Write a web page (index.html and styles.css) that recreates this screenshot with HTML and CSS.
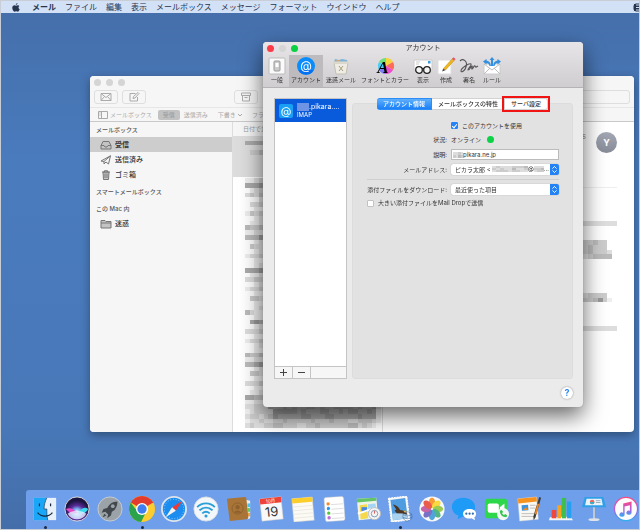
FILE: index.html
```html
<!DOCTYPE html>
<html lang="ja">
<head>
    <meta charset="UTF-8">
    <meta name="viewport" content="width=device-width, initial-scale=1.0">
    <title>メール - アカウント</title>
    <link rel="stylesheet" href="styles.css">
</head>
<body>
    <nav class="menubar">
        <svg class="apple" viewBox="0 0 16 18"><path d="M11 0c.2 2-1.500 3.800-3.300 3.900C7.500 2 9.200.3 11 0zM14.800 6.200c-2.700 1.700-2.300 5 .6 6.200-.8 2.300-2.400 4.900-4 4.900-1.300 0-1.700-.8-3.200-.8s-2 .8-3.200.8C2.800 17.300.5 13.300.5 9.700c0-3.500 2.200-5.300 4.300-5.300 1.400 0 2.500.9 3.400.9.800 0 2.100-1 3.800-1 1.200 0 2.200.6 2.800 1.900z"/></svg>
        <a href="#" class="app-name">メール</a>
        <a href="#">ファイル</a>
        <a href="#">編集</a>
        <a href="#">表示</a>
        <a href="#">メールボックス</a>
        <a href="#">メッセージ</a>
        <a href="#">フォーマット</a>
        <a href="#">ウインドウ</a>
        <a href="#">ヘルプ</a>
        <svg class="status-icon" viewBox="0 0 6 9"><rect width="12" height="9" rx="3"/><path d="M3 2h3M3 4.500h3M3 7h3"/></svg>
    </nav>

    <!-- Mail main window -->
    <section class="window mail">
        <header class="mail-head">
            <div class="lights"><i></i><i></i><i></i></div>
            <div class="mail-tools">
                <button aria-label="受信"><svg viewBox="0 0 12 10"><path d="M1 1.500h10v7H1zM1 1.500l5 4 5-4M1 8.500l3.500-4M11 8.500l-3.500-4"/></svg></button>
                <button aria-label="新規メッセージ"><svg viewBox="0 0 12 10"><path d="M7.500 1.500H2v7.500h7.500V5M5 6.500l.5-2L10 .5 11 1.500 7 6z"/></svg></button>
                <button class="archive" aria-label="アーカイブ"><svg viewBox="0 0 12 10"><path d="M1.500 1h9v2.500h-9zM2.500 3.500V9h7V3.500M4.500 5.500h3"/></svg></button>
                <input class="search" type="text" aria-label="検索">
            </div>
            <div class="favorites">
                <svg class="pane-icon" viewBox="0 0 10 8"><path d="M.5.5h9v7h-9zM3.500.5v7M1.500 2h1M1.500 4h1"/></svg>
                <a href="#">メールボックス</a>
                <a href="#" class="current">受信</a>
                <a href="#" class="sent">送信済み</a>
                <a href="#" class="draft">下書き<svg viewBox="0 0 6 4"><path d="M1 1l2 2 2-2"/></svg></a>
                <a href="#">フラグ</a>
            </div>
        </header>
        <div class="mail-body">
            <aside class="sidebar">
                <h3>メールボックス</h3>
                <a href="#" class="box selected"><svg viewBox="0 0 12 10"><path class="fill" d="M1 5.500 3 1.500h6l2 4V9H1z"/><path d="M1 5.500h3l1 1.500h2l1-1.500h3"/></svg>受信</a>
                <a href="#" class="box"><svg viewBox="0 0 12 10"><path d="M1 6 10.500.8 8.500 9 6 7 4 9V6.500L10.500.8M4 6.500 1 6"/></svg>送信済み</a>
                <a href="#" class="box"><svg viewBox="0 0 12 10"><path class="fill" d="M3 2h6l-.5 7.500h-5z"/><path d="M2 2h8M4.500 2V.7h3V2M5 3.500v4.500M7 3.500v4.500"/></svg>ゴミ箱</a>
                <h3>スマートメールボックス</h3>
                <h3>この Mac 内</h3>
                <a href="#" class="box"><svg viewBox="0 0 12 10"><path class="fill" d="M1 1.500h4l1 1h5V9H1z"/><path d="M1 4h10"/></svg>迷惑</a>
            </aside>
            <div class="list">
                <p>日付で並べ替え</p>
                <div class="list-items"><canvas id="messages"></canvas></div>
            </div>
            <article class="message">
                <div class="message-head"><span class="subject">s</span><span class="avatar">Y</span></div>
                <canvas id="body"></canvas>
            </article>
        </div>
    </section>

    <!-- Account preferences -->
    <section class="window prefs">
        <header class="prefs-head">
            <div class="lights active"><i></i><i></i><i></i></div>
            <h1>アカウント</h1>
            <div class="prefs-tools">
                <button><svg viewBox="0 0 18 18"><rect x="1" y="1" width="16" height="16" rx="1" fill="#fafafa" stroke="#bbb"/><rect x="6" y="4" width="6" height="10" rx="1" fill="#ccc" stroke="#999"/><rect x="7.500" y="6" width="3" height="4" fill="#fff"/></svg>一般</button>
                <button class="selected"><svg viewBox="0 0 18 18"><circle cx="9" cy="9" r="9" fill="#0a8dfb"/><path d="M1.200 13a9 9 0 0 0 15.600 0z" fill="#0571f0"/><text x="9" y="13" font-size="12" text-anchor="middle" fill="#fff">@</text></svg>アカウント</button>
                <button><svg viewBox="0 0 18 18"><path d="M2 5 3 2l4 1 3-1 5 1 1 3z" fill="#7fb2d6"/><path d="M3 4l4-1 1 2" fill="#f0a85a"/><path d="M2 6h14l-2 11H4z" fill="#eeece4" stroke="#c2bfb2"/><path d="M1 5.500h16" stroke="#ddd9cc" stroke-width="2"/><path d="M7 9l4 5M11 9l-4 5" stroke="#a69b78" fill="none"/></svg>迷惑メール</button>
                <button><svg viewBox="0 0 18 18"><path d="M10 9V1a8 8 0 0 1 7 4z" fill="#f7d43a"/><path d="M10 9l7-4a8 8 0 0 1 0 8z" fill="#ff6a5a"/><path d="M10 9l7 4a8 8 0 0 1-7 4z" fill="#ec4cd0"/><path d="M10 9v8a8 8 0 0 1-7-4z" fill="#7c7cf4"/><path d="M10 9l-7 4a8 8 0 0 1 0-8z" fill="#4ccdf5"/><path d="M10 9 3 5a8 8 0 0 1 7-4z" fill="#6be07c"/><text x="7" y="16" font-size="17" font-weight="bold" font-style="italic" text-anchor="middle" class="serif">A</text></svg>フォントとカラー</button>
                <button><svg viewBox="0 0 18 18"><path d="M0 3h18v10H0z" fill="#fff" stroke="#ccc"/><path d="M14 4h2.500v2.500H14z" fill="#3b9bdc"/><path d="M2 5h4M2 7h3" stroke="#ccc"/><g fill="#f4f4f4" stroke="#222" stroke-width="1.300"><circle cx="5" cy="13" r="3.300"/><circle cx="13" cy="13" r="3.300"/><path d="M8.300 12q.7-1 1.400 0" fill="none"/></g></svg>表示</button>
                <button><svg viewBox="0 0 18 18"><path d="M1 3h13v14H1z" fill="#fff" stroke="#ddd"/><path d="M6 12 16 1l2 1.500L8.500 13z" fill="#f3b51c" stroke="#b8860b" stroke-width=".5"/><path d="M15 2 16.500.3 18.500 2 17 3.500z" fill="#e2557f"/><path d="M6 12l-.8 2.500L8.500 13z" fill="#333"/></svg>作成</button>
                <button><svg viewBox="0 0 18 18"><path d="M0 4c3-3 8 0 6 6-1 4-5 6-5 4 0-3 8-8 10-7 1 2-4 5-3 6 2 0 3-4 4-4s-1 3 0 3 2-4 3-3 0 2 3 0" fill="none" stroke="#555" stroke-width="1.100"/></svg>署名</button>
                <button><svg viewBox="0 0 18 18"><path d="M1 7h16v10H1z" fill="#fff" stroke="#ccc"/><path d="M1 17l6-6M17 17l-6-6M1 7l8 6 8-6" fill="none" stroke="#bbb"/><path d="M8 9V3H6.500L9 0l2.500 3H10v6zM6.500 9C6 7 5 6 3.500 6v1.500L0 4.500 3.500 2v1.500C6.500 4 7.500 6 8 9zM11.500 9c.5-2 1.500-3 3-3v1.500l3.500-3L14.500 2v1.500C11.500 4 10.500 6 10 9z" fill="#338fdf"/></svg>ルール</button>
            </div>
        </header>
        <div class="prefs-body">
            <div class="accounts">
                <a href="#" class="account">
                    <svg viewBox="0 0 14 14"><rect width="14" height="14" rx="2" fill="#19a0f5"/><text x="7" y="11" font-size="11" text-anchor="middle" fill="#fff">@</text></svg>
                    <span><b><i class="hidden-name"></i>.pikara.…</b>IMAP</span>
                </a>
                <div class="account-buttons">
                    <button aria-label="追加"><svg viewBox="0 0 9 9"><path d="M1 4.500h7M4.500 1v7"/></svg></button>
                    <button aria-label="削除"><svg viewBox="0 0 9 9"><path d="M1 4.500h7"/></svg></button>
                </div>
            </div>
            <div class="settings">
                <div class="tabs">
                    <button class="on">アカウント情報</button>
                    <button>メールボックスの特性</button>
                    <button class="marked">サーバ設定</button>
                </div>
                <form class="panel">
                    <div class="row">
                        <span></span>
                        <label class="check"><input type="checkbox" checked>このアカウントを使用</label>
                    </div>
                    <div class="row">
                        <span>状況:</span>
                        <span class="online">オンライン<i></i></span>
                    </div>
                    <div class="row">
                        <label for="desc">説明:</label>
                        <div class="field"><canvas id="descName"></canvas><input id="desc" type="text" value="pikara.ne.jp"></div>
                    </div>
                    <div class="row">
                        <label for="address">メールアドレス:</label>
                        <div class="popup">
                            <select id="address"><option>ピカラ太郎 &lt;</option></select>
                            <span class="masked"><canvas id="user"></canvas>@<canvas id="domain"></canvas>…</span>
                            <svg viewBox="0 0 9 11"><path d="M2.500 4.500l2-2 2 2M2.500 6.500l2 2 2-2"/></svg>
                        </div>
                    </div>
                    <hr>
                    <div class="row">
                        <label for="attach">添付ファイルをダウンロード:</label>
                        <div class="popup">
                            <select id="attach"><option>最近使った項目</option></select>
                            <svg viewBox="0 0 9 11"><path d="M2.500 4.500l2-2 2 2M2.500 6.500l2 2 2-2"/></svg>
                        </div>
                    </div>
                    <label class="check"><input type="checkbox">大きい添付ファイルをMail Dropで送信</label>
                </form>
            </div>
        </div>
        <footer class="prefs-foot"><button class="help">?</button></footer>
    </section>

    <nav class="dock">
        <button class="running" aria-label="Finder"><svg viewBox="0 0 28 28"><path d="M2 2h24v24H2z" fill="#e8f1fa"/><path d="M2 2h14c-2 4-3 8-3 12h3c0 4 0 8 1 12H2z" fill="#1ba7f7"/><path d="M16 2c-2 4-3 8-3 12h3c0 4 0 8 1 12" fill="none" stroke="#1d3550" stroke-width=".7"/><path d="M8 8v3M20 8v3M6 18c4 5 12 5 16 0" fill="none" stroke="#14263c" stroke-width="1.300"/></svg></button>
        <button aria-label="Siri"><svg viewBox="0 0 28 28"><defs><radialGradient id="siri" cy=".65"><stop offset="0" stop-color="#fff"/><stop offset=".3" stop-color="#7cb8f4"/><stop offset=".6" stop-color="#5a2b9a"/><stop offset="1" stop-color="#1c1540"/></radialGradient></defs><circle cx="14" cy="14" r="13" fill="url(#siri)" stroke="#ddd"/><path d="M2 14c7-3 10 3 13 4-5 2-10 0-13-4z" fill="#e647c4"/><path d="M26 14c-5-4-9 2-12 4 5 3 10 0 12-4z" fill="#36d9ee"/><path d="M4 19c6-4 14-4 20 0-4 8-16 8-20 0z" fill="#e6eeff" opacity=".8"/></svg></button>
        <button aria-label="Launchpad"><svg viewBox="0 0 28 28"><circle cx="14" cy="14" r="13" fill="#9ba3a8" stroke="#c9ced1"/><path d="M22 6c-5 0-9 3-11 7l-4 1-2 4 4-1 3 3-1 4 4-3 1-4c4-2 6-6 6-11z" fill="#41474c"/><circle cx="17" cy="11" r="2" fill="#9ba3a8"/><path d="M8 19l-2 4 4-2z" fill="#41474c"/></svg></button>
        <button class="running" aria-label="Chrome"><svg viewBox="0 0 28 28"><circle cx="14" cy="14" r="14" fill="#fccd30"/><path d="M14 14 1.900 7a14 14 0 0 1 24.200 0z" fill="#e33b2e"/><path d="M14 14H7L1.900 7A14 14 0 0 0 13 28l5-10z" fill="#2ba24c"/><path d="M14 7.500h12.400l-.4-.6" fill="#e33b2e"/><circle cx="14" cy="14" r="6.500" fill="#fff"/><circle cx="14" cy="14" r="5" fill="#3f7ef0"/></svg></button>
        <button aria-label="Safari"><svg viewBox="0 0 28 28"><circle cx="14" cy="14" r="13" fill="#1c8df0" stroke="#dde4ea" stroke-width="2"/><circle cx="14" cy="14" r="10.500" fill="none" stroke="#9fd0fa" stroke-dasharray="1 2"/><path d="M23 5 16 16l-4-4z" fill="#f03a35"/><path d="M5 23l7-11 4 4z" fill="#f3f3f3"/></svg></button>
        <button aria-label="Wi-Fi"><svg viewBox="0 0 28 28"><circle cx="14" cy="14" r="13" fill="#f4f7fa" stroke="#d5dde4"/><path d="M4.500 12c5-5.500 14-5.500 19 0M7 15.500c4-4 10-4 14 0M10 18.700c2.500-2.300 5.500-2.300 8 0" fill="none" stroke="#2b9fd8" stroke-width="2"/><circle cx="14" cy="21.500" r="1.700" fill="#2b9fd8"/></svg></button>
        <button aria-label="連絡先"><svg viewBox="0 0 28 28"><path d="M21 4l5 1v19l-3 1z" fill="#eee"/><path d="M23 8h3v4h-3z" fill="#45c3ef"/><path d="M23 13h3v4h-3z" fill="#6cc94b"/><path d="M23 18h3v4h-3z" fill="#f2a33a"/><path d="M1 3 20 1q2 0 2 2l2 20q0 2-2 2L4 27z" fill="#a87437"/><circle cx="12.500" cy="13.500" r="6" fill="none" stroke="#8d602c"/><circle cx="12.500" cy="12" r="2.300" fill="#8d602c"/><path d="M8.500 18q4-5 8 0" fill="#8d602c"/></svg></button>
        <button aria-label="カレンダー"><svg viewBox="0 0 28 28"><g transform="rotate(-6 14 14)"><path d="M3 2h23v24H3z" fill="#f8f8f8" stroke="#ccc" stroke-width=".5"/><path d="M3 2h23v6H3z" fill="#ee4137"/><text x="14.500" y="7" font-size="5" text-anchor="middle" fill="#fff">10月</text><text x="14.500" y="22" font-size="14" text-anchor="middle" fill="#333">19</text></g></svg></button>
        <button aria-label="メモ"><svg viewBox="0 0 28 28"><g transform="rotate(-5 14 14)"><path d="M3 2h22v25H3z" fill="#fbfaf4" stroke="#d5d3c6" stroke-width=".5"/><path d="M3 2h22v5H3z" fill="#fcce2b"/><path d="M3 11h22M3 15h22M3 19h22M3 23h22" stroke="#e4e1d7" stroke-width=".7"/></g></svg></button>
        <button aria-label="リマインダー"><svg viewBox="0 0 28 28"><g transform="rotate(-4 14 14)"><rect x="3" y="1" width="21" height="26" rx="2" fill="#fff" stroke="#ccc" stroke-width=".5"/><path d="M10 9h13M10 14h13M10 19h13M10 24h13" stroke="#ddd"/><circle cx="7" cy="8" r="1.800" fill="#f58b2c"/><circle cx="7" cy="13" r="1.800" fill="#2d96ee"/><circle cx="7" cy="18" r="1.800" fill="#52c43e"/><circle cx="7" cy="23" r="1.800" fill="#c26be0"/></g></svg></button>
        <button aria-label="マップ"><svg viewBox="0 0 28 28"><path d="M2 3l21-1 2 22-21 2z" fill="#eef3e6"/><path d="M2 3l21-1v3L2 7z" fill="#65c466"/><path d="M5 10l8-1 1 15-8 1z" fill="#f5d84b"/><path d="M14 9l8-1 1 8-9 2z" fill="#a5d5f2"/><path d="M7 12h6v5H7z" fill="#4b87e0"/><path d="M3 19l18-6" stroke="#fff" stroke-width="2"/><circle cx="21" cy="19" r="6.500" fill="#f4f4f4" stroke="#bbb"/><circle cx="21" cy="19" r="3.500" fill="none" stroke="#7d9ab2"/><path d="M21 16v3" stroke="#d55"/></svg></button>
        <button class="running" aria-label="メール"><svg viewBox="0 0 28 28"><g transform="rotate(-7 14 14)"><path d="M3 1h20v26H3z" fill="#f7f7f7" stroke="#fff" stroke-dasharray="2 1"/><path d="M5 3h16v22H5z" fill="#4f9de0"/><path d="M5 18h16v7H5z" fill="#a9d2f0"/><path d="M7 8c4 2 6 4 7 7l6 2 1 4-5-2-6-1-2-3 2-1z" fill="#4b3524"/><path d="M17 16l4 1-2 2z" fill="#e0b84b"/></g><circle cx="22" cy="22" r="5" fill="none" stroke="#41618b" opacity=".5"/><path d="M17 20q5 3 10 0M17 23q5 3 10 0" fill="none" stroke="#41618b" opacity=".5"/></svg></button>
        <button aria-label="写真"><svg viewBox="0 0 28 28"><circle cx="14" cy="14" r="13.500" fill="#f8f8f8"/><g opacity=".9"><ellipse cx="14" cy="7.500" rx="3.500" ry="5.500" fill="#f7931e"/><ellipse cx="14" cy="7.500" rx="3.500" ry="5.500" fill="#f8d62c" transform="rotate(45 14 14)"/><ellipse cx="14" cy="7.500" rx="3.500" ry="5.500" fill="#93c83d" transform="rotate(90 14 14)"/><ellipse cx="14" cy="7.500" rx="3.500" ry="5.500" fill="#3fae78" transform="rotate(135 14 14)"/><ellipse cx="14" cy="7.500" rx="3.500" ry="5.500" fill="#3e9bd8" transform="rotate(180 14 14)"/><ellipse cx="14" cy="7.500" rx="3.500" ry="5.500" fill="#6a62c0" transform="rotate(225 14 14)"/><ellipse cx="14" cy="7.500" rx="3.500" ry="5.500" fill="#c055a0" transform="rotate(270 14 14)"/><ellipse cx="14" cy="7.500" rx="3.500" ry="5.500" fill="#e94b3c" transform="rotate(315 14 14)"/></g></svg></button>
        <button aria-label="メッセージ"><svg viewBox="0 0 28 28"><path d="M13 2c7 0 13 4 13 10s-6 10-13 10l-6 3 1-4c-4-1-7-5-7-9C1 6 6 2 13 2z" fill="#1d9bf7"/><path d="M20 14c4 0 7 2 7 5 0 2-1 4-2 4l1 3-4-2c-6 1-9-2-9-5s3-5 7-5z" fill="#fff"/><g fill="#2b6cb0"><circle cx="16.500" cy="19" r="1.200"/><circle cx="20" cy="19" r="1.200"/><circle cx="23.500" cy="19" r="1.200"/></g></svg></button>
        <button aria-label="FaceTime"><svg viewBox="0 0 28 28"><rect x="1" y="3" width="24" height="21" rx="3" fill="#2cd849"/><rect x="4" y="8" width="12" height="10" rx="2" fill="#fff"/><path d="M17 12l5-4v10l-5-4z" fill="#fff"/><circle cx="20.500" cy="19.500" r="6.500" fill="#f4f8f4"/><path d="M17 16c0 4 3 7 7 7l1-2-2-1.500-1.500 1q-1.500-1-2-2l1-1.500-1.500-2z" fill="#35c64e"/></svg></button>
        <button aria-label="Pages"><svg viewBox="0 0 28 28"><path d="M2 3l20-2 2 24-20 2z" fill="#faf8f3" stroke="#ddd" stroke-width=".5"/><path d="M2 3l20-2 .5 5-20 2z" fill="#f5931e"/><path d="M6 10l7-.6.4 6-7 .6z" fill="#3b93dd"/><path d="M7 15l4-3 2 3z" fill="#f28a1e"/><path d="M15 10h6M15 13h6M6 19h15M6 22h15" stroke="#bbb"/><path d="M25 1l2 1-6 21-2 3-.3-4z" fill="#3d3a38"/><path d="M23 8l2 .6L22 20l-2-.5z" fill="#f0861c"/></svg></button>
        <button aria-label="Numbers"><svg viewBox="0 0 28 28"><path d="M2 23l22-1 3 4H1z" fill="#f4f4f4"/><path d="M4 15h5v9H4z" fill="#f0463c"/><path d="M10 10h4v14h-4z" fill="#f6a421"/><path d="M15 2h4.500v22H15z" fill="#3cbf4e"/><path d="M20.500 6H25v18h-4.500z" fill="#259ff0"/></svg></button>
        <button aria-label="Keynote"><svg viewBox="0 0 28 28"><path d="M4 1h20l3 11H1z" fill="#2f9fe6"/><path d="M6 3h16l1.500 7h-19z" fill="#e9f3fa"/><circle cx="12" cy="6.500" r="2.500" fill="#f06a5c"/><path d="M9.500 6.500h5a2.500 2.500 0 0 1-5 0z" fill="#39b0c8"/><path d="M16 5h5M16 7h5" stroke="#9ab"/><path d="M14 12v13" stroke="#c7ccd2" stroke-width="2"/><ellipse cx="14" cy="25.500" rx="6" ry="1.500" fill="#dfe3e7"/></svg></button>
        <button aria-label="iTunes"><svg viewBox="0 0 28 28"><defs><linearGradient id="note" x2="0" y2="1"><stop offset="0" stop-color="#fb4a80"/><stop offset=".5" stop-color="#b45be0"/><stop offset="1" stop-color="#31aef2"/></linearGradient></defs><circle cx="14" cy="14" r="12.500" fill="#fcfcfd" stroke="url(#note)" stroke-width="1.500"/><path d="M11 8l9-2v12a2.800 2.300 0 1 1-1.800-2.200V10L12.500 11.300V20a2.800 2.300 0 1 1-1.500-2z" fill="url(#note)"/></svg></button>
    </nav>

    <script>
        // Paint one pixel per hex digit, the stylesheet scales the canvas up
        function mosaic(id, width, rows) {
            const canvas = document.getElementById(id);
            canvas.width = width;
            canvas.height = rows.length;
            const ctx = canvas.getContext('2d');
            rows.forEach((row, y) => {
                [...row].forEach((digit, x) => {
                    if (digit === '.') return;
                    ctx.fillStyle = '#' + digit + digit + digit;
                    ctx.fillRect(x, y, 1, 1);
                });
            });
        }

        mosaic('messages', 29, [
            '....', 'aaaa5', '....', '.ccb9', '....', '....', '....', '....', '....', 'eedc',
            'aaa95', 'fedc', 'dcdb8', 'fffd', 'fddc9', 'ffee', 'ecdc8', 'ffed', 'feed', 'bccb6',
            'eedd', 'bbb96', 'ffed', 'fcdd9', 'ffed', 'eddc9', 'ffee', 'ffed', 'aaa94', 'feed',
            'ddcc9', 'ffed', 'eddc9', 'ffee', 'fccd9', 'ffee', 'ffed', 'bdee8', 'ffee', 'fa9a6',
            'ffed', 'dddc8', 'ffee', 'eddc9', 'ffed', 'ffee', 'bccb6', 'eedd', 'bba97', 'ffed',
            'fccd9', 'ffee', 'dddc8', 'ffee', 'feed', 'aabb6', 'eedd', 'ddccc9aa9a9aa99a9aa9999a9aa9d',
            'edcccc99999a9aaa99aa9a99aa9ae', 'dccdcb9aaaaa99aaa99aaaaa9aaae',
            'eddcddccbcccccbcccbcccddcccde', 'dcddccbbcccddccbccccccbbdcde'
        ]);
        mosaic('body', 10, [
            'dddddddddd', '..........', '..........', '..........', 'ccbccbcc..', 'ccccbccc..', 'dddcbcccd.', 'cdcdcbbbb.',
            '..........', '..........', '..........', '..........', '..........', '..........', '..........', 'ccddcccc..', 'bdbccb9ce.',
            '..........', '..........', '..........', '..........', '..........', 'dddddddddd'
        ]);
        mosaic('descName', 4, ['ddcd', 'cdbc']);
        mosaic('user', 9, ['dcdddcccb', 'cdcddbddc', 'dcccdccdd']);
        mosaic('domain', 3, ['ddd', 'ccb', 'dcc']);
    </script>
</body>
</html>
```
FILE: styles.css
```css
* {
    box-sizing: border-box;
}

body {
    margin: 0;
    min-height: 100vh;
    position: relative;
    overflow: hidden;
    border: 1px solid #c9cdd6;
    background: linear-gradient(#446ea9, #4a7bbd 30%, #4878b8 80%, #446ea9);
    font-family: Inter, "Noto Sans CJK JP", sans-serif;
    font-size: 6px;
    line-height: 8px;
    color: #333;
}

a {
    color: inherit;
    text-decoration: none;
}

button,
input,
select {
    font: inherit;
    color: inherit;
    margin: 0;
    padding: 0;
    border: none;
    background: none;
}

h1,
h3,
p {
    margin: 0;
}

canvas {
    display: block;
    image-rendering: pixelated;
}

.serif {
    font-family: "Liberation Serif", serif;
}

/* menu bar */
.menubar {
    display: flex;
    align-items: center;
    gap: 9px;
    height: 12px;
    padding-left: 11px;
    background: #d3e1f6;
    color: #26344e;
    font-size: 8px;
    line-height: 12px;
}

.app-name {
    font-weight: bold;
}

.apple {
    width: 8px;
    height: 9px;
    margin-right: 3px;
    fill: #26344e;
}

.status-icon {
    width: 6px;
    height: 9px;
    margin-left: auto;
    fill: #26344e;
    stroke: #d3e1f6;
}

/* windows */
.window {
    position: absolute;
    display: flex;
    flex-direction: column;
    border-radius: 4px;
    overflow: hidden;
}

.lights {
    display: flex;
    gap: 5px;
    padding: 3px 4px;
}

.lights i {
    width: 7px;
    height: 7px;
    border-radius: 50%;
    background: #d5d5d5;
}

.lights.active i:first-child {
    background: #fb3b47;
}

.lights.active i:last-child {
    background: #09d142;
}

.mail {
    left: 89px;
    right: 5px;
    top: 75px;
    bottom: 97px;
    background: #fff;
    box-shadow: 0 3px 10px rgba(0, 0, 0, 0.35);
}

.mail-head {
    background: #f6f6f6;
    border-bottom: 1px solid #c9c9c9;
}

.mail-tools {
    display: flex;
    gap: 4px;
    padding: 1px 4px 3px;
}

.mail-tools button,
.search {
    width: 24px;
    height: 14px;
    border: 1px solid #dedede;
    border-radius: 3px;
}

.mail-tools svg {
    display: block;
    width: 12px;
    height: 10px;
    margin: 0 auto;
    fill: none;
    stroke: #aaa;
}

.mail-tools .archive {
    margin-left: 84px;
}

.search {
    width: 80px;
    margin-left: auto;
}

.favorites {
    display: flex;
    align-items: center;
    height: 14px;
    padding-left: 8px;
    border-top: 1px solid #e6e6e6;
    color: #a9a9a9;
}

.favorites svg {
    fill: none;
    stroke: #a9a9a9;
}

.pane-icon {
    width: 10px;
    height: 8px;
    margin-right: 2px;
}

.favorites .current {
    margin: 0 4px 0 6px;
    padding: 1px 5px;
    border-radius: 2px;
    background: #c2c2c2;
    color: #999;
}

.sent {
    margin-right: 10px;
}

.draft {
    margin-right: 9px;
}

.draft svg {
    width: 6px;
    height: 4px;
    margin-left: 1px;
}

.mail-body {
    flex: 1;
    display: flex;
    min-height: 0;
}

.sidebar {
    width: 142px;
    background: #f6f6f6;
}

.sidebar h3 {
    padding: 4px 6px 3px;
    font-size: 6px;
    font-weight: 500;
    color: #555;
}

.box + h3,
.sidebar h3 + h3 {
    padding-top: 6px;
}

.box {
    display: flex;
    align-items: center;
    gap: 3px;
    height: 15px;
    padding-left: 10px;
    font-size: 7px;
    font-weight: 500;
}

.box.selected {
    background: #cdcdcd;
    font-weight: bold;
}

.box svg {
    width: 12px;
    height: 10px;
    fill: none;
    stroke: #777;
}

.box .fill {
    fill: #c4c4c4;
}

.list {
    width: 151px;
    border: solid #ddd;
    border-width: 0 1px;
}

.list p {
    padding: 3px 10px;
    background: #f6f6f6;
    color: #999;
}

.list-items {
    padding-left: 12px;
    background: linear-gradient(#dcdcdc 41px, #fff 41px);
}

#messages {
    width: 136px;
    height: 292px;
}

.message {
    flex: 1;
    padding: 10px 17px 0;
}

.message-head {
    display: flex;
    justify-content: flex-end;
    gap: 10px;
    height: 56px;
    border-bottom: 1px solid #eee;
    color: #999;
    font-size: 8px;
}

.avatar {
    width: 21px;
    height: 21px;
    border-radius: 50%;
    background: linear-gradient(#a3a8b4, #878b98);
    color: #fff;
    font-size: 9px;
    line-height: 21px;
    font-weight: bold;
    text-align: center;
}

#body {
    width: 48px;
    height: 110px;
    margin: 33px 0 0 auto;
}

/* preferences */
.prefs {
    left: 262px;
    top: 41px;
    width: 320px;
    background: #ebebeb;
    box-shadow: 0 0 1px #777, 0 9px 22px rgba(0, 0, 0, 0.6);
}

.prefs-head {
    position: relative;
    height: 46px;
    background: linear-gradient(#e8e5e8, #cfcdcf);
    border-bottom: 1px solid #b5b3b5;
}

.prefs-head h1 {
    position: absolute;
    inset: 2px 0 auto;
    font-size: 7px;
    font-weight: normal;
    text-align: center;
}

.prefs-tools {
    display: flex;
    gap: 1px;
    padding-left: 3px;
}

.prefs-tools button {
    display: flex;
    flex-direction: column;
    align-items: center;
    gap: 1px;
    min-width: 22px;
    height: 32px;
    padding: 2px 2px 0;
    white-space: nowrap;
}

.prefs-tools .selected {
    background: #bdbbbd;
}

.prefs-tools svg {
    width: 18px;
    height: 18px;
    overflow: visible;
}

.prefs-body {
    display: flex;
    gap: 5px;
    padding: 10px 10px 0 11px;
}

.accounts {
    display: flex;
    flex-direction: column;
    width: 73px;
    height: 281px;
    border: 1px solid #c4c4c4;
    background: #fff;
}

.account {
    display: flex;
    align-items: center;
    gap: 4px;
    height: 23px;
    padding-left: 4px;
    background: #0a5bdc;
    color: #fff;
}

.account svg {
    width: 14px;
    height: 14px;
}

.account b {
    display: flex;
    align-items: center;
    font-size: 7px;
    font-weight: normal;
}

.hidden-name {
    width: 12px;
    height: 8px;
    background: #6f94e4;
}

.account-buttons {
    display: flex;
    height: 12px;
    margin-top: auto;
    border-top: 1px solid #c4c4c4;
    background: #f6f6f6;
}

.account-buttons button {
    width: 18px;
    border-right: 1px solid #c4c4c4;
}

.account-buttons svg {
    display: block;
    width: 9px;
    height: 9px;
    margin: 0 auto;
    stroke: #444;
}

.settings {
    flex: 1;
    display: flex;
    flex-direction: column;
}

.tabs {
    position: relative;
    display: flex;
    justify-content: center;
    height: 12px;
    margin-bottom: -7px;
}

.tabs button {
    padding: 0 6px;
    border: 1px solid #d2d2d2;
    border-left: none;
    background: #fff;
    font-weight: 500;
}

.tabs .on {
    border-color: #2d8df6;
    border-radius: 3px 0 0 3px;
    background: linear-gradient(#5eb0fc, #1a7ff7);
    color: #fff;
}

.tabs .marked {
    position: relative;
    border-radius: 0 3px 3px 0;
}

.marked::after {
    content: "";
    position: absolute;
    inset: -3px;
    border: 2px solid #f01414;
}

.panel {
    flex: 1;
    padding: 16px 13px 0 14px;
    border: 1px solid #dcdcdc;
    border-radius: 3px;
    background: #e2e2e2;
}

.row {
    display: grid;
    grid-template-columns: 80px 1fr;
    gap: 4px;
    align-items: center;
    height: 11px;
    margin-bottom: 4px;
    white-space: nowrap;
}

.row:first-child {
    margin-bottom: 3px;
}

.row > :first-child {
    text-align: right;
}

.row > * {
    min-width: 0;
}

.check {
    display: flex;
    align-items: center;
    gap: 4px;
}

.check input {
    appearance: none;
    width: 7px;
    height: 7px;
    border: 1px solid #c2c2c2;
    border-radius: 1px;
    background: #fff;
}

.check input:checked {
    border-color: #2583f6;
    background: #2583f6;
    position: relative;
}

.check input:checked::after {
    content: "";
    position: absolute;
    left: 1px;
    top: 0;
    width: 2px;
    height: 4px;
    border: solid #fff;
    border-width: 0 1px 1px 0;
    transform: rotate(40deg);
}

.online {
    display: flex;
    align-items: center;
    gap: 6px;
}

.online i {
    width: 7px;
    height: 7px;
    border-radius: 50%;
    background: #0bd246;
}

.field {
    display: flex;
    align-items: center;
    height: 11px;
    padding-left: 1px;
    border: 1px solid #bbb;
    background: #fff;
}

.field input {
    flex: 1;
    min-width: 0;
    height: 9px;
    outline: none;
}

#descName {
    width: 10px;
    height: 6px;
}

.popup {
    position: relative;
    display: flex;
    height: 11px;
    border-radius: 2px;
    overflow: hidden;
    background: #fff;
    box-shadow: 0 0 1px #888;
}

.popup select {
    flex: 1;
    min-width: 0;
    padding-left: 4px;
    appearance: none;
    outline: none;
}

.popup svg {
    width: 9px;
    height: 11px;
    background: #2482f7;
    fill: none;
    stroke: #fff;
}

.masked {
    position: absolute;
    inset: 1px auto auto 41px;
    display: flex;
    align-items: center;
}

#user {
    width: 36px;
    height: 6px;
}

#domain {
    width: 10px;
    height: 6px;
}

hr {
    margin: 0 0 4px;
    border: none;
    border-top: 1px solid #cfcfcf;
}

.prefs-foot {
    display: flex;
    justify-content: flex-end;
    padding: 8px 10px;
}

.help {
    width: 12px;
    height: 12px;
    border-radius: 50%;
    background: #fff;
    box-shadow: 0 0 2px #888;
    color: #2f8df5;
    font-size: 9px;
    line-height: 12px;
    font-weight: bold;
}

/* dock */
.dock {
    position: absolute;
    left: 25px;
    right: 0;
    bottom: 0;
    display: flex;
    justify-content: space-between;
    height: 39px;
    padding: 6px 0 0 6px;
    border-radius: 3px 0 0 0;
    background: #6f9fea;
}

.dock button {
    position: relative;
    display: flex;
    align-items: flex-start;
    width: 26px;
}

.dock svg {
    display: block;
    width: 26px;
    height: 26px;
}

.running::after {
    content: "";
    position: absolute;
    left: 12px;
    bottom: 0;
    width: 3px;
    height: 3px;
    border-radius: 50%;
    background: #1b2a45;
}
```
